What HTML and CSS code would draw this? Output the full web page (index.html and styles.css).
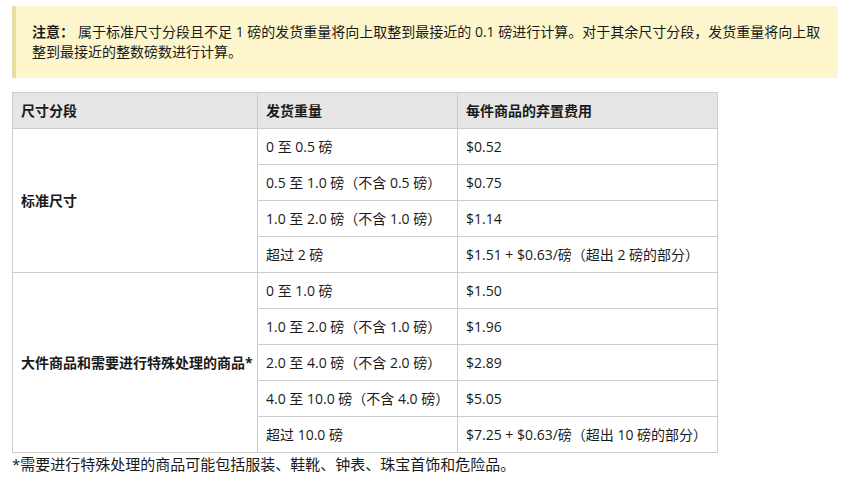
FILE: index.html
```html
<!DOCTYPE html>
<html lang="zh-CN">
<head>
<meta charset="utf-8">
<link rel="stylesheet" href="styles.css">
</head>
<body>
<div class="note"><b class="label">注意：</b>属于标准尺寸分段且不足 1 磅的发货重量将向上取整到最接近的 0.1 磅进行计算。对于其余尺寸分段，发货重量将向上取整到最接近的整数磅数进行计算。</div>
<table class="fees">
  <colgroup><col class="c1"><col class="c2"><col class="c3"></colgroup>
  <thead>
    <tr><th>尺寸分段</th><th>发货重量</th><th>每件商品的弃置费用</th></tr>
  </thead>
  <tbody>
    <tr><th class="tier" rowspan="4">标准尺寸</th><td>0 至 0.5 磅</td><td>$0.52</td></tr>
    <tr><td>0.5 至 1.0 磅（不含 0.5 磅）</td><td>$0.75</td></tr>
    <tr><td>1.0 至 2.0 磅（不含 1.0 磅）</td><td>$1.14</td></tr>
    <tr><td>超过 2 磅</td><td>$1.51 + $0.63/磅（超出 2 磅的部分）</td></tr>
    <tr><th class="tier" rowspan="5">大件商品和需要进行特殊处理的商品*</th><td>0 至 1.0 磅</td><td>$1.50</td></tr>
    <tr><td>1.0 至 2.0 磅（不含 1.0 磅）</td><td>$1.96</td></tr>
    <tr><td>2.0 至 4.0 磅（不含 2.0 磅）</td><td>$2.89</td></tr>
    <tr><td>4.0 至 10.0 磅（不含 4.0 磅）</td><td>$5.05</td></tr>
    <tr><td>超过 10.0 磅</td><td>$7.25 + $0.63/磅（超出 10 磅的部分）</td></tr>
  </tbody>
</table>
<p class="foot">*需要进行特殊处理的商品可能包括服装、鞋靴、钟表、珠宝首饰和危险品。</p>
</body>
</html>
```

FILE: styles.css
```css
html, body { margin: 0; background: #fff; }
body {
  padding: 6px 4px 0 12px;
  font-family: "Open Sans", "Noto Sans CJK SC", sans-serif;
  font-size: 14px;
  color: #1a1a1a;
}
.note {
  background: #fdf6cc;
  border-left: 4px solid #e8dc9e;
  padding: 16px 16px 16px 16px;
  line-height: 20px;
  width: 790px;
}
.note .label { font-weight: 700; margin-right: 4px; }
.fees {
  margin-top: 14px;
  border-collapse: collapse;
  width: 705px;
  table-layout: fixed;
}
.c1 { width: 245px; }
.c2 { width: 200px; }
.c3 { width: 260px; }
.fees th, .fees td {
  border: 1px solid #cccccc;
  padding: 8px 8px;
  line-height: 19px;
  text-align: left;
  white-space: nowrap;
}
.fees thead th { background: #e6e6e6; font-weight: 700; }
.fees td { font-weight: 400; }
.fees .tier { font-weight: 700; vertical-align: middle; }
.foot {
  margin: 0;
  font-size: 15px;
  line-height: 22px;
}
```
